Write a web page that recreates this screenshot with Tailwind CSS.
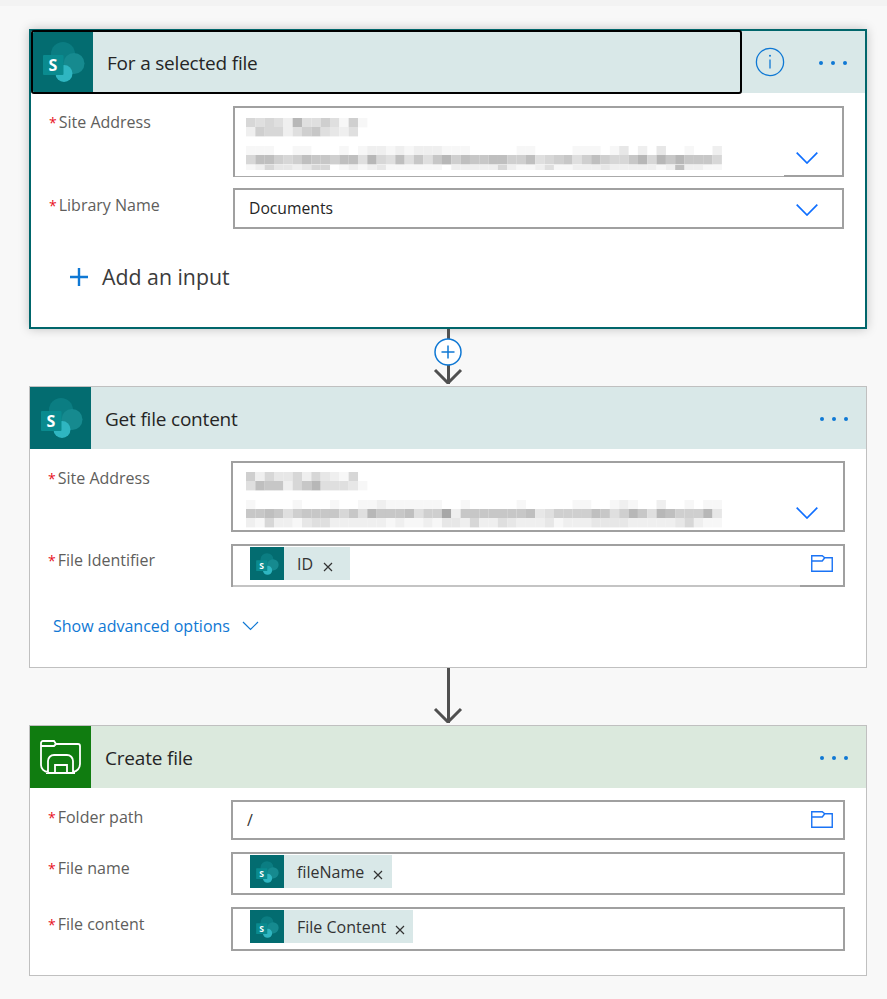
<!DOCTYPE html>
<html>
<head>
<meta charset="utf-8">
<script src="https://cdn.jsdelivr.net/npm/@tailwindcss/browser@4"></script>
</head>
<body class="m-0 bg-[#f8f8f8]">
<svg width="0" height="0" class="absolute">
  <defs>
    <symbol id="sp" viewBox="0 0 48 48">
      <circle cx="24" cy="16" r="12" fill="#0b7d82"/>
      <circle cx="35" cy="25.5" r="10.5" fill="#168a8f"/>
      <circle cx="25" cy="35.5" r="8.5" fill="#2fb6c1"/>
      <rect x="4" y="17" width="20.5" height="20" rx="1" fill="#0a8b8f"/>
      <text x="14" y="32.5" text-anchor="middle" font-family="Open Sans, sans-serif" font-weight="700" font-size="16" fill="#fff">S</text>
    </symbol>
    <symbol id="chev" viewBox="0 0 22 12"><path d="M.7.7 L11 11 L21.3.7" fill="none" stroke="#0f6fff" stroke-width="1.7"/></symbol>
    <symbol id="folder" viewBox="0 0 22 17"><path d="M.75.75h10.5l2.5 2h7.5v13.5H.75zM.75 6h10.5l2.5-3.25" fill="none" stroke="#1a73f5" stroke-width="1.4"/></symbol>
    <symbol id="down" viewBox="0 0 30 22"><path d="M2 8 L15 21 L28 8" fill="none" stroke="#505050" stroke-width="3"/></symbol>
    <symbol id="x" viewBox="0 0 10 10"><path d="M1 1 L9 9 M9 1 L1 9" fill="none" stroke="#333" stroke-width="1.2"/></symbol>
  </defs>
</svg>
<div class="h-[6px] bg-[#f3f3f3]"></div>
<main class="pl-[29px] w-[867px] pt-[23px] flex flex-col font-['Open_Sans','Noto_Sans',sans-serif]">

  <!-- Card 1 -->
  <section class="h-[300px] border-2 border-[#00666b] bg-white shadow-[0_0_10px_rgba(0,0,0,0.22)] flex flex-col">
    <header class="h-[62px] shrink-0 bg-[#d9e8e8] flex items-center">
      <div class="w-[711px] h-[64px] rounded-[3px] border-2 border-black flex items-center -my-[1px] overflow-hidden relative z-10">
        <div class="w-[60px] h-full bg-[#036c70] flex items-center justify-center"><svg class="w-[48px] h-[48px]"><use href="#sp"/></svg></div>
        <span class="ml-[14px] mt-[2px] text-[19px] tracking-[-0.2px] text-[#252525]">For a selected file</span>
      </div>
      <svg class="ml-[13px] w-[30px] h-[30px]" viewBox="0 0 30 30"><circle cx="15" cy="15" r="13.6" fill="none" stroke="#0f78d4" stroke-width="1.3"/><path d="M15 12.5v9" stroke="#0f78d4" stroke-width="1.3"/><circle cx="15" cy="8.8" r="1" fill="#0f78d4"/></svg>
      <div class="ml-[34px] mt-[1px] flex gap-[8px]"><i class="w-[4px] h-[4px] rounded-full bg-[#0f78d4]"></i><i class="w-[4px] h-[4px] rounded-full bg-[#0f78d4]"></i><i class="w-[4px] h-[4px] rounded-full bg-[#0f78d4]"></i></div>
    </header>
    <div class="pl-[18px] pr-[21px] pt-[13px] flex flex-col">
      <div class="flex h-[71px]">
        <label class="w-[184px] text-[16px] leading-[32px] text-[#605e5c]"><span class="text-[#e81123] text-[14px] mr-[2px]">*</span>Site Address</label>
        <div class="flex-1 border-2 border-[#a0a0a0] relative">
          <svg data-blur="a" class="absolute left-[11px] top-[10px] blur-[0.5px]" width="480" height="52"></svg>
          <svg class="absolute right-[24px] bottom-[11px] w-[22px] h-[12px]"><use href="#chev"/></svg>
          <div class="absolute left-0 -bottom-[2px] w-[549px] h-[2px] bg-white border-b border-[#aaaaaa]"></div>
        </div>
      </div>
      <div class="flex h-[41px] mt-[11px]">
        <label class="w-[184px] text-[16px] leading-[34px] text-[#605e5c]"><span class="text-[#e81123] text-[14px] mr-[2px]">*</span>Library Name</label>
        <div class="flex-1 border-2 border-[#a0a0a0] flex items-center pl-[14px] text-[15.7px] text-[#252525] relative">Documents
          <svg class="absolute right-[24px] top-[14px] w-[22px] h-[12px]"><use href="#chev"/></svg>
        </div>
      </div>
      <div class="flex items-center mt-[32px] ml-[20px] text-[21.3px] text-[#3b3b3b]">
        <svg class="w-[20px] h-[20px] mr-[13px]" viewBox="0 0 20 20"><path d="M10 1v18M1 10h18" stroke="#0f78d4" stroke-width="2.4"/></svg>Add an input
      </div>
    </div>
  </section>

  <!-- connector 1 -->
  <div class="h-[57px] relative flex justify-center">
    <div class="w-[3px] h-[55px] bg-[#505050]"></div>
    <svg class="absolute left-[404px] top-[33px] w-[30px] h-[22px]"><use href="#down"/></svg>
    <svg class="absolute left-[405px] top-[9px] w-[28px] h-[28px]" viewBox="0 0 28 28"><circle cx="14" cy="14" r="13" fill="#fff" stroke="#0f78d4" stroke-width="1.5"/><path d="M14 7.5v13M7.5 14h13" stroke="#0f78d4" stroke-width="1.5"/></svg>
  </div>

  <!-- Card 2 -->
  <section class="h-[282px] border border-[#c0c0c0] bg-white flex flex-col">
    <header class="h-[62px] shrink-0 bg-[#d9e8e8] flex items-center">
      <div class="w-[61px] h-full bg-[#036c70] flex items-center justify-center"><svg class="w-[48px] h-[48px]"><use href="#sp"/></svg></div>
      <span class="ml-[14px] mt-[2px] text-[19px] tracking-[-0.2px] text-[#252525] flex-1">Get file content</span>
      <div class="mr-[18px] mt-[1px] flex gap-[8px]"><i class="w-[4px] h-[4px] rounded-full bg-[#0f78d4]"></i><i class="w-[4px] h-[4px] rounded-full bg-[#0f78d4]"></i><i class="w-[4px] h-[4px] rounded-full bg-[#0f78d4]"></i></div>
    </header>
    <div class="pl-[18px] pr-[21px] pt-[12px] flex flex-col">
      <div class="flex h-[71px]">
        <label class="w-[183px] text-[16px] leading-[34px] text-[#605e5c]"><span class="text-[#e81123] text-[14px] mr-[2px]">*</span>Site Address</label>
        <div class="flex-1 border-2 border-[#a0a0a0] relative">
          <svg data-blur="b" class="absolute left-[13px] top-[9px] blur-[0.5px]" width="480" height="56"></svg>
          <svg class="absolute right-[25px] bottom-[11px] w-[22px] h-[12px]"><use href="#chev"/></svg>
        </div>
      </div>
      <div class="flex h-[43px] mt-[12px]">
        <label class="w-[183px] text-[16px] leading-[32px] text-[#605e5c]"><span class="text-[#e81123] text-[14px] mr-[2px]">*</span>File Identifier</label>
        <div class="flex-1 border-2 border-[#a0a0a0] relative flex items-start pt-[1px] pl-[17px]">
          <div class="h-[33px] flex items-center bg-[#d9e8e8] text-[16px] text-[#333] pr-[17px]">
            <div class="w-[34px] h-[33px] bg-[#036c70] flex items-center justify-center"><svg class="w-[26px] h-[26px]"><use href="#sp"/></svg></div>
            <span class="ml-[13px]">ID</span>
            <svg class="w-[10px] h-[10px] ml-[10px] mt-[6px]"><use href="#x"/></svg>
          </div>
          <svg class="absolute right-[10px] top-[9px] w-[22px] h-[17px]"><use href="#folder"/></svg>
          <div class="absolute left-0 -bottom-[2px] w-[567px] h-[2px] bg-[#c4c4c4]"></div>
        </div>
      </div>
      <div class="flex items-center mt-[27px] ml-[5px] text-[16px] text-[#0f78d4]">Show advanced options
        <svg class="w-[17px] h-[10px] ml-[12px]" viewBox="0 0 17 10"><path d="M1 1l7.5 7.5L16 1" fill="none" stroke="#0f78d4" stroke-width="1.2"/></svg>
      </div>
    </div>
  </section>

  <!-- connector 2 -->
  <div class="h-[57px] relative flex justify-center">
    <div class="w-[3px] h-[55px] bg-[#505050]"></div>
    <svg class="absolute left-[404px] top-[33px] w-[30px] h-[22px]"><use href="#down"/></svg>
  </div>

  <!-- Card 3 -->
  <section class="h-[251px] border border-[#c0c0c0] bg-white flex flex-col">
    <header class="h-[62px] shrink-0 bg-[#dbe9dd] flex items-center">
      <div class="w-[61px] h-full bg-[#107c10] flex items-center justify-center">
        <svg class="w-[41px] h-[34px]" viewBox="0 0 41 34" fill="none" stroke="#fff" stroke-width="1.8"><path d="M1 25V3a2 2 0 0 1 2-2h11l2 3h22a2 2 0 0 1 2 2v18a8 8 0 0 1-7 8M1 25a7 7 0 0 0 7 7M1 6h13l2-2M8 33V21a6 6 0 0 1 6-6h13a6 6 0 0 1 6 6v12M6 33h29M15 33v-8h12v8"/></svg>
      </div>
      <span class="ml-[14px] mt-[2px] text-[19px] tracking-[-0.2px] text-[#252525] flex-1">Create file</span>
      <div class="mr-[18px] mt-[1px] flex gap-[8px]"><i class="w-[4px] h-[4px] rounded-full bg-[#0f78d4]"></i><i class="w-[4px] h-[4px] rounded-full bg-[#0f78d4]"></i><i class="w-[4px] h-[4px] rounded-full bg-[#0f78d4]"></i></div>
    </header>
    <div class="pl-[18px] pr-[21px] pt-[12px] flex flex-col">
      <div class="flex h-[40px]">
        <label class="w-[183px] text-[16px] leading-[34px] text-[#605e5c]"><span class="text-[#e81123] text-[14px] mr-[2px]">*</span>Folder path</label>
        <div class="flex-1 border-2 border-[#a0a0a0] relative flex items-center pl-[14px] text-[16px] text-[#333]">/
          <svg class="absolute right-[10px] top-[9px] w-[22px] h-[17px]"><use href="#folder"/></svg>
        </div>
      </div>
      <div class="flex h-[43px] mt-[12px]">
        <label class="w-[183px] text-[16px] leading-[32px] text-[#605e5c]"><span class="text-[#e81123] text-[14px] mr-[2px]">*</span>File name</label>
        <div class="flex-1 border-2 border-[#a0a0a0] flex items-start pt-[1px] pl-[17px]">
          <div class="h-[33px] flex items-center bg-[#d9e8e8] text-[16px] text-[#333] pr-[9px]">
            <div class="w-[34px] h-[33px] bg-[#036c70] flex items-center justify-center"><svg class="w-[26px] h-[26px]"><use href="#sp"/></svg></div>
            <span class="ml-[13px]">fileName</span>
            <svg class="w-[10px] h-[10px] ml-[9px] mt-[6px]"><use href="#x"/></svg>
          </div>
        </div>
      </div>
      <div class="flex h-[44px] mt-[12px]">
        <label class="w-[183px] text-[16px] leading-[34px] text-[#605e5c]"><span class="text-[#e81123] text-[14px] mr-[2px]">*</span>File content</label>
        <div class="flex-1 border-2 border-[#a0a0a0] flex items-start pt-[1px] pl-[17px]">
          <div class="h-[33px] flex items-center bg-[#d9e8e8] text-[16px] text-[#333] pr-[8px]">
            <div class="w-[34px] h-[33px] bg-[#036c70] flex items-center justify-center"><svg class="w-[26px] h-[26px]"><use href="#sp"/></svg></div>
            <span class="ml-[13px]">File Content</span>
            <svg class="w-[10px] h-[10px] ml-[9px] mt-[6px]"><use href="#x"/></svg>
          </div>
        </div>
      </div>
    </div>
  </section>
</main>
<script>
  // Obscured text: each hex digit is one mosaic cell's darkness (0 = white)
  var mosaic = {
    a: [[0,"5454294464161"],[9,"265524674324"],
        [28,"1110011000101221212221110"+"00001100001110130203001002"],
        [37,"5886568776884954847479687"+"78866845674686557959797775"],
        [47,"1253323550121231111110222"+"22521124112223222221282211"]],
    b: [[0,"625335253215"],[9,"4877257944431"],
        [28,"1000010001001121111110010"+"00001000001100121002001011"],
        [37,"778746777757497778466b277"+"77777834666687469749866693"],
        [46,"2152213442222221211213325"+"22432223122233332222235211"]]
  };
  document.querySelectorAll('svg[data-blur]').forEach(function (svg) {
    var out = '';
    mosaic[svg.dataset.blur].forEach(function (row) {
      row[1].split('').forEach(function (d, i) {
        var n = parseInt(d, 16);
        if (!n) return;
        var g = 255 - n * 8;
        out += '<rect x="' + (i * 9.33) + '" y="' + row[0] + '" width="9.4" height="9.4" fill="rgb(' + g + ',' + g + ',' + g + ')"/>';
      });
    });
    svg.innerHTML = out;
  });
</script>
</body>
</html>
